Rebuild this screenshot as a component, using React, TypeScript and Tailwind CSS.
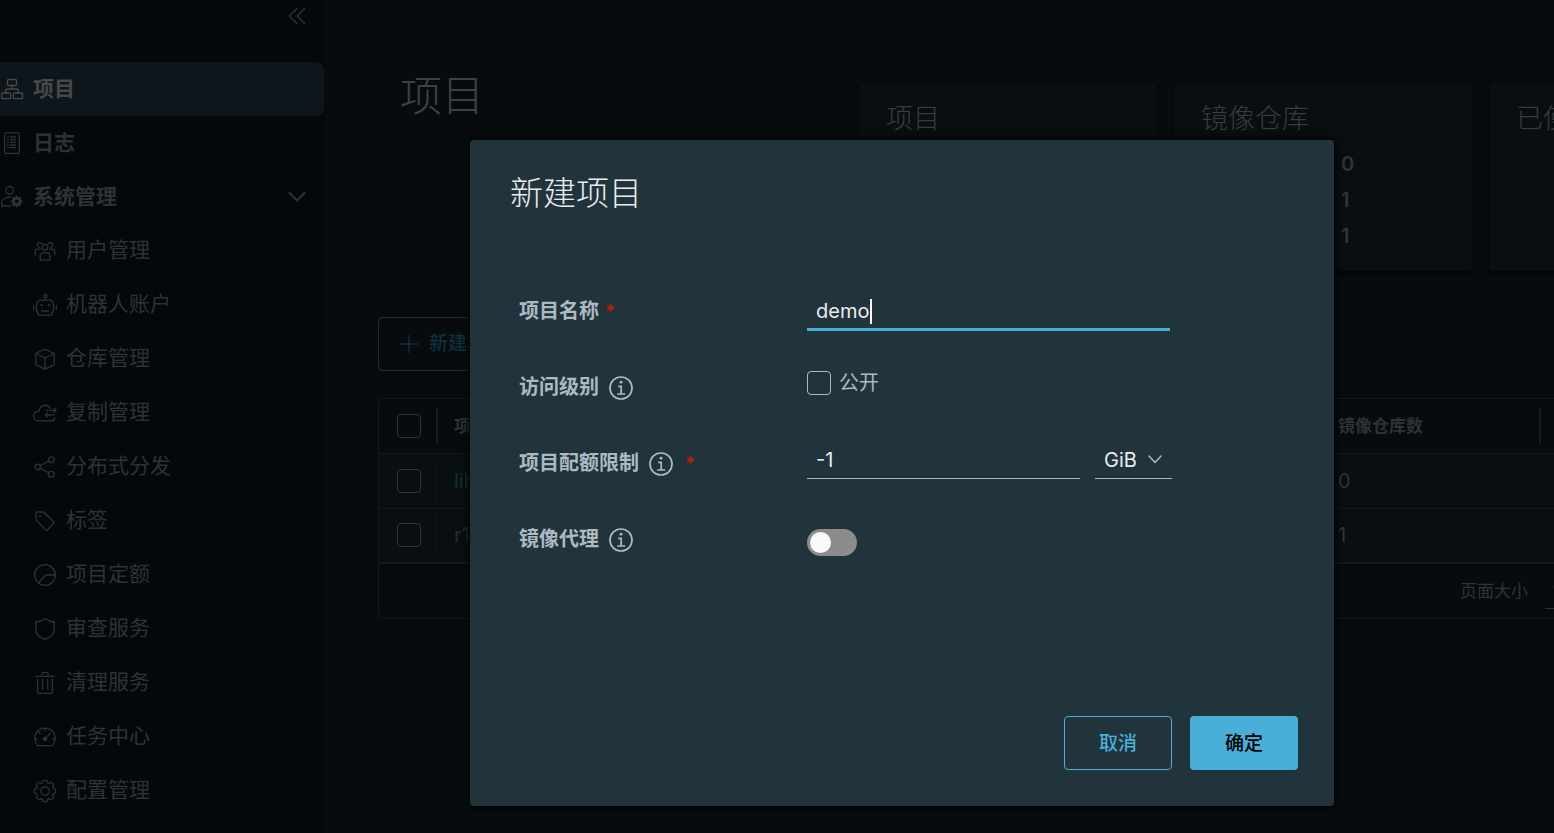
import { useState } from 'react';
import type { ReactNode } from 'react';
import clsx from 'clsx';

interface IconProps {
  children: ReactNode;
  viewBox?: string;
  className?: string;
  strokeWidth?: number;
}

function Icon({ children, viewBox = '0 0 24 24', className = 'size-6', strokeWidth = 1.3 }: IconProps) {
  return (
    <svg
      viewBox={viewBox}
      className={clsx('shrink-0', className)}
      fill="none"
      stroke="currentColor"
      strokeWidth={strokeWidth}
      strokeLinecap="round"
      strokeLinejoin="round"
      aria-hidden="true"
    >
      {children}
    </svg>
  );
}

const ProjectsIcon = () => (
  <Icon>
    <rect x="7.5" y="2.5" width="9" height="6" rx="1" />
    <rect x="1.7" y="16" width="9" height="5.7" rx="1" />
    <rect x="13.6" y="16" width="9" height="5.7" rx="1" />
    <path d="M12 8.5V12M5.7 16v-2.6q0-1.4 1.4-1.4h9.8q1.4 0 1.4 1.4V16" />
  </Icon>
);

const LogsIcon = () => (
  <Icon>
    <rect x="4.6" y="1.8" width="14.8" height="20.6" rx="1" />
    <path
      strokeLinecap="butt"
      d="M7.2 6h1.6M10 6h6M7.2 8.7h1.6M10 8.7h6M7.2 11.3h1.6M10 11.3h6M7.2 14h1.6M10 14h6M7.2 16.7h1.6M10 16.7h6"
    />
  </Icon>
);

const AdminIcon = () => (
  <Icon>
    <circle cx="9.7" cy="5.3" r="3.8" />
    <path d="M10.4 21H1.7v-3.4c0-3.4 4-5.6 8.8-5.6" />
    <circle cx="16.7" cy="16.4" r="3.2" strokeWidth="2.8" />
    <path
      strokeLinecap="butt"
      strokeWidth="2.2"
      d="M16.7 12.4v-1.9M16.7 20.4v1.9M12.7 16.4h-1.9M20.7 16.4h1.9M13.9 13.6l-1.3-1.3M19.5 13.6l1.3-1.3M13.9 19.2l-1.3 1.3M19.5 19.2l1.3 1.3"
    />
  </Icon>
);

const UsersIcon = () => (
  <Icon>
    <circle cx="12" cy="8.2" r="2.8" />
    <path d="M7.2 21.2v-4.4q0-2.9 3-2.9h3.6q3 0 3 2.9v4.4z" />
    <path d="M6.4 8.3A2.4 2.4 0 1 1 8.9 4.7M17.6 8.3a2.4 2.4 0 1 0-2.5-3.6" />
    <path d="M2.3 16v-3.2q0-2.6 2.8-2.6h2.4M21.7 16v-3.2q0-2.6-2.8-2.6h-2.4" />
  </Icon>
);

const RobotIcon = () => (
  <Icon>
    <circle cx="12.4" cy="3" r="1.6" />
    <path d="M12.4 4.8V7.2M6.2 7.2h11.6q2.9 2.2 2.9 7.1 0 5-2.9 7.9H6.2Q3.3 19.3 3.3 14.3q0-4.9 2.9-7.1z" />
    <path d="M.6 12.6v3.6M23.4 12.6v3.6M8.8 18h6.6" />
    <path d="M8.5 12.2h.1M15.9 12.2h.1" strokeWidth="2.2" />
  </Icon>
);

const BoxIcon = () => (
  <Icon>
    <path d="M12 2.2l9.2 4.3v11.2L12 22.2l-9.2-4.5V6.5zM2.8 6.5L12 11l9.2-4.5M12 11v11.2" />
  </Icon>
);

const CloudSyncIcon = () => (
  <Icon>
    <path d="M17.2 7.5C14.9 2.6 7 3.2 6 10.2 2.4 10.4.7 12.7.7 15c0 2.7 2 4.9 5 4.9h12.6q3 0 3.2-3" />
    <path d="M13.5 9.3h1M16.5 9.3h6.6M21 7.2l2.2 2.1-2.2 2.1M21 14h-.6M18.6 14h-6.3M14.5 11.9L12.3 14l2.2 2.1" />
  </Icon>
);

const ShareIcon = () => (
  <Icon>
    <circle cx="4.7" cy="12" r="2.8" />
    <circle cx="18.3" cy="4.7" r="2.9" />
    <circle cx="18.3" cy="19.3" r="2.9" />
    <path d="M7.3 10.8l8.3-4.6M7.3 13.2l8.3 4.6" />
  </Icon>
);

const TagIcon = () => (
  <Icon>
    <path d="M3 3.6q0-.6.6-.6h6.6q.4 0 .7.3l10 9.7q.4.4 0 .8l-6.7 7.6q-.4.4-.8 0L3.3 11.6Q3 11.3 3 10.9z" />
    <path d="M7 7h.1" strokeWidth="2" />
  </Icon>
);

const QuotaIcon = () => (
  <Icon>
    <circle cx="12" cy="12" r="10.3" />
    <path d="M22.2 12h-9.4L5.7 19.8" />
  </Icon>
);

const ShieldIcon = () => (
  <Icon>
    <path d="M12 1.7q4.3 3 9.2 3.3v7.5q0 6.5-9.2 9.9-9.2-3.4-9.2-9.9V5Q7.7 4.7 12 1.7z" />
  </Icon>
);

const TrashIcon = () => (
  <Icon>
    <path d="M2.8 5.3h18.2M8.9 3.7V2.6q0-.9.9-.9h4.5q.9 0 .9.9v1.1M4.6 8.2v12.9q0 1.2 1.2 1.2h12.4q1.2 0 1.2-1.2V8.2M9.5 8.6v9.7M14.7 8.6v9.7" />
  </Icon>
);

const DashboardIcon = () => (
  <Icon>
    <path d="M4.4 20.6C-1.6 12.4 4 3.2 12 3.2s13.600 9.200 7.600 17.400zM12 3.400v2.400M5.200 6.600l1.900 1.700M1.800 14.200h2.400M19.800 14.200h2.400M12.800 12.900L17.200 8.500" />
    <circle cx="12" cy="13.9" r="1.6" fill="currentColor" />
  </Icon>
);

const GearIcon = () => (
  <Icon viewBox="0 0 36 36" strokeWidth={1.9}>
    <circle cx="18" cy="18" r="6.3" />
    <path d="M32.8 14.7L30 13.8l-.6-1.5 1.4-2.6c.3-.6.2-1.4-.3-1.9l-2.4-2.4c-.5-.5-1.3-.6-1.9-.3l-2.6 1.4-1.5-.6-.9-2.8C21 2.5 20.4 2 19.7 2h-3.4c-.7 0-1.3.5-1.4 1.2L14 6c-.6.1-1.1.3-1.6.6L9.8 5.2C9.2 4.9 8.4 5 7.9 5.5L5.5 7.9C5 8.4 4.9 9.2 5.2 9.8l1.3 2.5c-.2.5-.4 1.1-.6 1.6l-2.8.9C2.5 15 2 15.6 2 16.3v3.4c0 .7.5 1.3 1.2 1.5L6 22.1l.6 1.5-1.4 2.6c-.3.6-.2 1.4.3 1.9l2.4 2.4c.5.5 1.3.6 1.9.3l2.6-1.4 1.5.6.9 2.9c.2.6.8 1.1 1.5 1.1h3.4c.7 0 1.3-.5 1.5-1.1l.9-2.9 1.5-.6 2.6 1.4c.6.3 1.4.2 1.9-.3l2.4-2.4c.5-.5.6-1.3.3-1.9l-1.4-2.6.6-1.5 2.9-.9c.6-.2 1.1-.8 1.1-1.5v-3.4c0-.7-.5-1.4-1.2-1.6z" />
  </Icon>
);

const InfoIcon = () => (
  <Icon strokeWidth={1.7}>
    <circle cx="12" cy="12" r="11" />
    <path d="M9.2 10.3h3v7.5M8.2 18h8" strokeLinecap="butt" />
    <path d="M12 6.2h.1" strokeWidth="2.8" />
  </Icon>
);

const adminItems = [
  { label: '用户管理', icon: <UsersIcon /> },
  { label: '机器人账户', icon: <RobotIcon /> },
  { label: '仓库管理', icon: <BoxIcon /> },
  { label: '复制管理', icon: <CloudSyncIcon /> },
  { label: '分布式分发', icon: <ShareIcon /> },
  { label: '标签', icon: <TagIcon /> },
  { label: '项目定额', icon: <QuotaIcon /> },
  { label: '审查服务', icon: <ShieldIcon /> },
  { label: '清理服务', icon: <TrashIcon /> },
  { label: '任务中心', icon: <DashboardIcon /> },
  { label: '配置管理', icon: <GearIcon /> },
];

const projects = [
  { name: 'library', role: '项目管理员', count: 0, link: true },
  { name: 'r1', role: '项目管理员', count: 1, link: false },
];

function Sidebar() {
  return (
    <aside className="w-[324px] shrink-0 bg-[#04080b] text-[21px] leading-[30px] text-[#2e3235]">
      <div className="flex h-11 items-start justify-end border-b border-[#080c0f] pt-1 pr-[15px]">
        <button type="button" aria-label="收起">
          <Icon strokeWidth={1.5}>
            <path d="M12 4.5L4.5 12l7.5 7.5M19.5 4.5L12 12l7.5 7.500" />
          </Icon>
        </button>
      </div>
      <nav className="pt-[18px]">
        <a href="#projects" className="flex h-[54px] items-center gap-[9px] rounded-r-lg bg-[#0f161b] font-bold text-[#46494b]">
          <ProjectsIcon />
          项目
        </a>
        <a href="#logs" className="flex h-[54px] items-center gap-[9px] font-bold">
          <LogsIcon />
          日志
        </a>
        <button type="button" className="flex h-[54px] w-full items-center gap-[9px] pr-[15px] font-bold">
          <AdminIcon />
          系统管理
          <Icon className="ml-auto size-6" strokeWidth={2}>
            <path d="M4.5 8l7.5 7.5L19.5 8" />
          </Icon>
        </button>
        <ul>
          {adminItems.map((item) => (
            <li key={item.label}>
              <a href="#admin" className="flex h-[54px] items-center gap-[9px] pl-[33px]">
                {item.icon}
                <span className="pb-0.5">{item.label}</span>
              </a>
            </li>
          ))}
        </ul>
      </nav>
    </aside>
  );
}

function StatCard({ title, values }: { title: string; values: [string, number][] }) {
  return (
    <section className="h-[190px] w-[300px] shrink-0 rounded border border-[#040708] bg-[#090e11] px-[27px] pt-[17px] shadow-[0_4px_0_#040608]">
      <h2 className="text-[27px] leading-[38px] font-extralight text-[#373b3e]">{title}</h2>
      <dl className="mt-2 text-xl leading-9 font-semibold text-[#303437]">
        {values.map(([name, value]) => (
          <div key={name} className="grid grid-cols-[140px_1fr]">
            <dt className="font-normal">{name}</dt>
            <dd>{value}</dd>
          </div>
        ))}
      </dl>
    </section>
  );
}

function RowCheckbox({ label }: { label: string }) {
  return (
    <input
      type="checkbox"
      aria-label={label}
      className="block size-6 appearance-none rounded border border-[#2e3336]"
    />
  );
}

function ProjectsTable() {
  return (
    <div className="w-[1426px] rounded border border-[#14191c]">
      <table className="w-full table-fixed text-left">
        <colgroup>
          <col className="w-[59px]" />
          <col className="w-[294px]" />
          <col className="w-[294px]" />
          <col className="w-[296px]" />
          <col className="w-[219px]" />
          <col />
        </colgroup>
        <thead className="text-[17px] font-bold text-[#2e3235]">
          <tr className="h-[54px] border-b border-[#14191c]">
            <th>
              <div className="flex items-center justify-between border-r-2 border-[#171c1f] py-1.5 pl-[18px]">
                <RowCheckbox label="全选" />
              </div>
            </th>
            {['项目名称', '访问级别', '角色', '镜像仓库数'].map((name) => (
              <th key={name}>
                <div className="border-r-2 border-[#171c1f] py-1.5 pl-4 leading-6">{name}</div>
              </th>
            ))}
            <th className="pl-4">创建时间</th>
          </tr>
        </thead>
        <tbody className="bg-[#090e11] text-xl leading-7 text-[#303437]">
          {projects.map((project) => (
            <tr key={project.name} className="h-[55px] border-b border-[#14191c] last:border-b-2">
              <td>
                <div className="mr-[2px] border-r border-[#14191c] py-2 pl-[18px]">
                  <RowCheckbox label={project.name} />
                </div>
              </td>
              <td className="pl-4">
                <a href="#project" className={project.link ? 'text-[#112d3a]' : 'text-[#252738]'}>
                  {project.name}
                </a>
              </td>
              <td className="pl-4">公开</td>
              <td className="pl-4">{project.role}</td>
              <td className="pl-4">{project.count}</td>
              <td />
            </tr>
          ))}
        </tbody>
      </table>
      <div className="flex h-[54px] items-center pl-[1081px] text-[17px] leading-6 text-[#303437]">
        <label htmlFor="page-size">页面大小</label>
        <select id="page-size" defaultValue="15" className="ml-[17px] h-9 w-16 appearance-none border-b border-[#2e3235] pl-2">
          <option>15</option>
          <option>25</option>
        </select>
      </div>
    </div>
  );
}

function FormRow({ label, htmlFor, info, required, children }: {
  label: string;
  htmlFor: string;
  info?: boolean;
  required?: boolean;
  children: ReactNode;
}) {
  return (
    <div className="grid min-h-[76px] grid-cols-[288px_1fr] items-center">
      <div className="flex items-center text-[#acbac3]">
        <label htmlFor={htmlFor} className="text-xl leading-7 font-bold">
          {label}
        </label>
        {info && (
          <span className="ml-2.5 pt-0.5">
            <InfoIcon />
          </span>
        )}
        {required && (
          <span className={clsx('text-lg leading-6 font-bold text-[#b32100]', info ? 'ml-3' : 'ml-1.5')}>*</span>
        )}
      </div>
      {children}
    </div>
  );
}

function NewProjectDialog() {
  const [name, setName] = useState('demo');
  const [quota, setQuota] = useState('-1');

  return (
    <div className="absolute inset-0 flex items-start justify-center pt-[140px] pl-[250px]">
      <form
        role="dialog"
        aria-labelledby="dialog-title"
        className="w-[864px] rounded bg-[#22343b] pt-8 pb-9 shadow-[0_1px_6px_2px_#030506]"
        onSubmit={(e) => e.preventDefault()}
      >
        <h2 id="dialog-title" className="px-10 text-[33px] leading-[42px] font-extralight text-[#e9ecef]">
          新建项目
        </h2>
        <div className="mt-[59px] pl-[49px] text-xl leading-7">
          <FormRow label="项目名称" htmlFor="name" required>
            <div className="pt-0.5">
              <div className="relative w-[363px]">
                <input
                  id="name"
                  value={name}
                  onChange={(e) => setName(e.target.value)}
                  className="block h-[38px] w-full border-b-3 border-[#49afd9] px-[9px] text-[#e9ecef] outline-none"
                />
                <span className="absolute top-1.5 left-[63px] h-[25px] w-[2px] bg-white" />
              </div>
            </div>
          </FormRow>
          <FormRow label="访问级别" htmlFor="public" info>
            <div className="flex items-center gap-2 pb-2">
              <input id="public" type="checkbox" className="size-6 appearance-none rounded border border-[#acbac3]" />
              <label htmlFor="public" className="text-[#acbac3]">
                公开
              </label>
            </div>
          </FormRow>
          <FormRow label="项目配额限制" htmlFor="quota" info required>
            <div className="flex gap-[15px] pb-0.5 text-[#e9ecef]">
              <input
                id="quota"
                value={quota}
                onChange={(e) => setQuota(e.target.value)}
                className="h-[34px] w-[273px] border-b border-[#acbac3] px-[9px] pb-1 outline-none"
              />
              <div className="relative">
                <select
                  aria-label="单位"
                  defaultValue="GiB"
                  className="h-[34px] w-[77px] appearance-none border-b border-[#acbac3] px-[9px] pb-1"
                >
                  <option className="text-black">MiB</option>
                  <option className="text-black">GiB</option>
                  <option className="text-black">TiB</option>
                </select>
                <span className="pointer-events-none absolute top-[6px] right-[9px] text-[#b9b5b5]">
                  <Icon className="size-4" viewBox="0 0 16 16" strokeWidth={1.5}>
                    <path d="M2 5l6 6.5L14 5" />
                  </Icon>
                </span>
              </div>
            </div>
          </FormRow>
          <FormRow label="镜像代理" htmlFor="proxy" info>
            <div className="pt-1.5">
              <input
                id="proxy"
                type="checkbox"
                role="switch"
                className="flex h-[27px] w-[50px] appearance-none items-center rounded-full bg-[#8c8c8c] px-[3px] before:size-[21px] before:rounded-full before:bg-[#fafafa] checked:justify-end checked:bg-[#49afd9]"
              />
            </div>
          </FormRow>
        </div>
        <div className="mt-[139px] flex justify-end gap-[18px] pr-9 text-[19px] leading-7 font-medium">
          <button type="button" className="h-[54px] w-[108px] rounded border border-[#49afd9] pt-0.5 text-[#49afd9]">
            取消
          </button>
          <button type="submit" className="h-[54px] w-[108px] rounded bg-[#49afd9] pt-0.5 text-black">
            确定
          </button>
        </div>
      </form>
    </div>
  );
}

export default function App() {
  return (
    <div className="relative flex min-h-screen overflow-hidden bg-[#070b0e] font-[Inter,'Noto_Sans_CJK_SC',sans-serif]">
      <Sidebar />
      <main className="min-w-0 flex-1 overflow-hidden pt-[72px] pl-[54px]">
        <div className="flex">
          <h1 className="w-[480px] shrink-0 pl-[22px] text-[42px] leading-[48px] font-extralight text-[#3e4143]">项目</h1>
          <div className="mt-2.5 flex gap-[15px]">
            <StatCard title="项目" values={[['私有', 0], ['公开', 2], ['总计', 2]]} />
            <StatCard title="镜像仓库" values={[['私有', 0], ['公开', 1], ['总计', 1]]} />
            <StatCard title="已使用的存储" values={[]} />
          </div>
        </div>
        <button
          type="button"
          className="mt-[45px] flex h-[54px] items-center gap-2 rounded border border-[#10303f] px-[18px] text-[19px] font-medium text-[#10303f]"
        >
          <Icon strokeWidth={1.3}>
            <path d="M12 3.5v17M3.5 12h17" />
          </Icon>
          新建项目
        </button>
        <div className="mt-[27px]">
          <ProjectsTable />
        </div>
      </main>
      <NewProjectDialog />
    </div>
  );
}
